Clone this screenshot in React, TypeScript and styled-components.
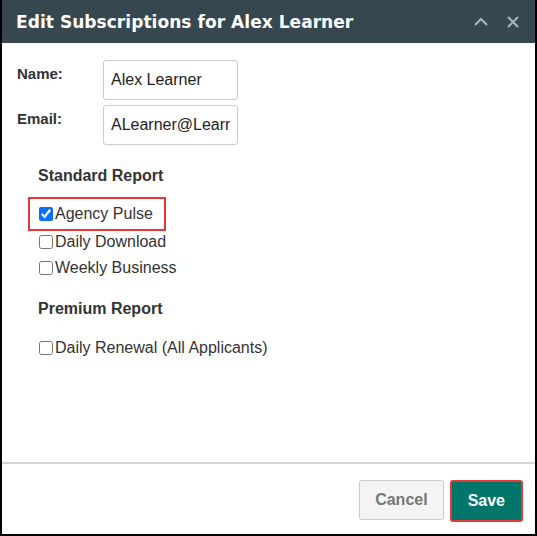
import React from "react";
import styled, { createGlobalStyle } from "styled-components";

const Global = createGlobalStyle`
  html, body { margin: 0; padding: 0; background: #fff; }
  * { box-sizing: border-box; }
`;

const Dialog = styled.div`
  width: 537px;
  height: 536px;
  display: flex;
  flex-direction: column;
  border-left: 2px solid #000;
  border-right: 2px solid #000;
  border-bottom: 2px solid #000;
  background: #fff;
  font-family: "Liberation Sans", Arial, sans-serif;
  color: #333;
`;

const Header = styled.div`
  height: 43px;
  background: #37474f;
  display: flex;
  align-items: center;
  padding: 0 12px 0 14px;
  flex-shrink: 0;
`;

const Title = styled.h1`
  margin: 0;
  flex: 1;
  font-family: "DejaVu Sans", Verdana, sans-serif;
  font-size: 17px;
  font-weight: bold;
  letter-spacing: 0.05px;
  color: #fff;
`;

const IconBtn = styled.button`
  background: none;
  border: none;
  padding: 0;
  width: 20px;
  height: 20px;
  margin-left: 12px;
  display: flex;
  align-items: center;
  justify-content: center;
  color: #aab2b6;
`;

const Body = styled.div`
  flex: 1;
  padding: 17px 0 0 15px;
`;

const FieldRow = styled.div`
  display: flex;
  align-items: flex-start;
  margin-bottom: 5px;
`;

const Label = styled.label`
  width: 86px;
  font-size: 15px;
  font-weight: bold;
  color: #333;
  padding-top: 5px;
`;

const Input = styled.input`
  width: 135px;
  height: 40px;
  border: 1px solid #ccc;
  border-radius: 3px;
  padding: 0 7px;
  font-family: "Liberation Sans", Arial, sans-serif;
  font-size: 16px;
  color: #222;
  outline: none;
`;

const Section = styled.div<{ $top: number }>`
  padding-left: 21px;
  margin-top: ${(p) => p.$top}px;
`;

const SectionTitle = styled.h2<{ $gap: number }>`
  margin: 0 0 ${(p) => p.$gap}px 0;
  font-size: 16px;
  font-weight: bold;
  color: #333;
`;

const CheckRow = styled.label<{ $highlight?: boolean }>`
  display: flex;
  align-items: center;
  width: fit-content;
  font-size: 16px;
  color: #333;
  outline: ${(p) => (p.$highlight ? "2px solid #e53935" : "none")};
  margin: ${(p) => (p.$highlight ? "0 0 0 -8px" : "0")};
  padding: ${(p) => (p.$highlight ? "0 11px 0 8px" : "0")};
  height: ${(p) => (p.$highlight ? "30px" : "26px")};
`;

const Check = styled.input`
  width: 14px;
  height: 14px;
  margin: 0 2px 0 1px;
  accent-color: #0b6ffd;
`;

const Footer = styled.div`
  height: 72px;
  border-top: 2px solid #d4d4d4;
  display: flex;
  justify-content: flex-end;
  align-items: flex-start;
  gap: 6px;
  padding: 16px 12px 0 0;
  flex-shrink: 0;
`;

const Button = styled.button<{ $primary?: boolean }>`
  height: ${(p) => (p.$primary ? "42px" : "40px")};
  padding: 0 ${(p) => (p.$primary ? "16px" : "15px")};
  font-family: "Liberation Sans", Arial, sans-serif;
  font-size: 16px;
  font-weight: bold;
  border-radius: 3px;
  border: ${(p) => (p.$primary ? "2px solid #e53935" : "1px solid #ccc")};
  background: ${(p) => (p.$primary ? "#00766a" : "#f4f4f4")};
  color: ${(p) => (p.$primary ? "#fff" : "#777")};
  box-shadow: ${(p) => (p.$primary ? "inset 0 0 0 1px #00766a" : "none")};
`;

export default function App() {
  return (
    <>
      <Global />
      <Dialog>
        <Header>
          <Title>Edit Subscriptions for Alex Learner</Title>
          <IconBtn aria-label="Collapse">
            <svg width="16" height="10" viewBox="0 0 16 10">
              <path d="M2 8 L8 2 L14 8" fill="none" stroke="currentColor" strokeWidth="2.2" />
            </svg>
          </IconBtn>
          <IconBtn aria-label="Close">
            <svg width="14" height="14" viewBox="0 0 14 14">
              <path d="M2 2 L12 12 M12 2 L2 12" fill="none" stroke="currentColor" strokeWidth="2.2" />
            </svg>
          </IconBtn>
        </Header>
        <Body>
          <FieldRow>
            <Label>Name:</Label>
            <Input defaultValue="Alex Learner" />
          </FieldRow>
          <FieldRow>
            <Label>Email:</Label>
            <Input defaultValue="ALearner@Learner.com" />
          </FieldRow>
          <Section $top={22}>
            <SectionTitle $gap={14}>Standard Report</SectionTitle>
            <CheckRow $highlight>
              <Check type="checkbox" defaultChecked />
              Agency Pulse
            </CheckRow>
            <CheckRow>
              <Check type="checkbox" />
              Daily Download
            </CheckRow>
            <CheckRow>
              <Check type="checkbox" />
              Weekly Business
            </CheckRow>
          </Section>
          <Section $top={19}>
            <SectionTitle $gap={17}>Premium Report</SectionTitle>
            <CheckRow>
              <Check type="checkbox" />
              Daily Renewal (All Applicants)
            </CheckRow>
          </Section>
        </Body>
        <Footer>
          <Button>Cancel</Button>
          <Button $primary>Save</Button>
        </Footer>
      </Dialog>
    </>
  );
}
